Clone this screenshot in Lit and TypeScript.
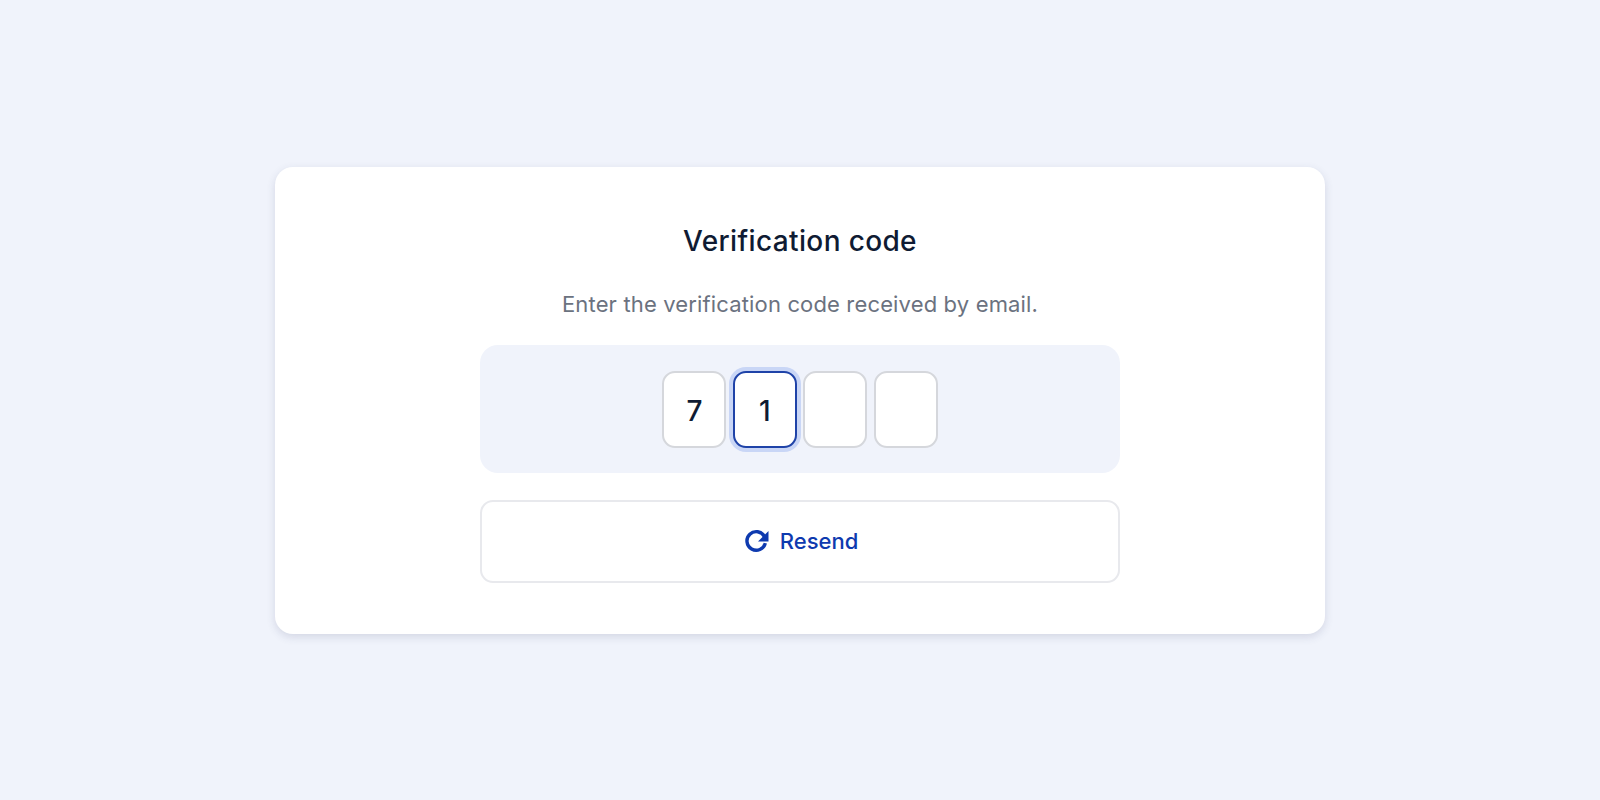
import { LitElement, html, css } from "lit";
import { customElement } from "lit/decorators.js";

@customElement("app-root")
export class AppRoot extends LitElement {
  static styles = css`
    :host {
      display: flex;
      align-items: center;
      justify-content: center;
      width: 100%;
      height: 800px;
      background: #f0f3fb;
      font-family: Inter, "Liberation Sans", sans-serif;
    }
    .card {
      box-sizing: border-box;
      width: 1050px;
      height: 467px;
      padding: 52px 205px 0;
      background: #fff;
      border-radius: 18px;
      box-shadow: 0 3px 8px rgba(60, 70, 110, 0.16);
      display: flex;
      flex-direction: column;
      align-items: stretch;
    }
    h1 {
      margin: 0;
      font-size: 28px;
      line-height: 44px;
      font-weight: 500;
      letter-spacing: 0.36px;
      color: #0f1b33;
      text-align: center;
    }
    p {
      margin: 26px 0 0;
      font-size: 22px;
      line-height: 30px;
      font-weight: 400;
      letter-spacing: 0.15px;
      color: #6b7280;
      text-align: center;
    }
    .panel {
      box-sizing: border-box;
      margin-top: 26px;
      height: 128px;
      padding-top: 2px;
      background: #f0f3fb;
      border-radius: 18px;
      display: flex;
      align-items: center;
      justify-content: center;
      gap: 6.4px;
    }
    .digit {
      box-sizing: border-box;
      width: 64px;
      height: 77px;
      padding-top: 2px;
      background: #fff;
      border: 2px solid #d5d7dc;
      border-radius: 13px;
      display: flex;
      align-items: center;
      justify-content: center;
      font-size: 28px;
      font-weight: 500;
      color: #0f1b33;
    }
    .digit.focus {
      border-color: #1f43a8;
      box-shadow: 0 0 0 4px #c9d6f6;
    }
    .resend {
      box-sizing: border-box;
      margin-top: 27px;
      height: 83px;
      padding-left: 2px;
      background: #fff;
      border: 2px solid #e8e9ed;
      border-radius: 13px;
      display: flex;
      align-items: center;
      justify-content: center;
      gap: 10px;
      font-size: 22px;
      font-weight: 500;
      color: #0e3aaf;
    }
    svg {
      width: 26px;
      height: 26px;
      display: block;
    }
  `;

  render() {
    return html`
      <div class="card">
        <h1>Verification code</h1>
        <p>Enter the verification code received by email.</p>
        <div class="panel">
          <div class="digit">7</div>
          <div class="digit focus">1</div>
          <div class="digit"></div>
          <div class="digit"></div>
        </div>
        <div class="resend">
          <svg viewBox="0 0 26 26" fill="none">
            <path d="M21.3 15.2a9.3 9.3 0 1 1-0.8-6.6" stroke="currentColor" stroke-width="3.4" />
            <path d="M24.5 3v10.5H14z" fill="currentColor" />
          </svg>
          <span>Resend</span>
        </div>
      </div>
    `;
  }
}
